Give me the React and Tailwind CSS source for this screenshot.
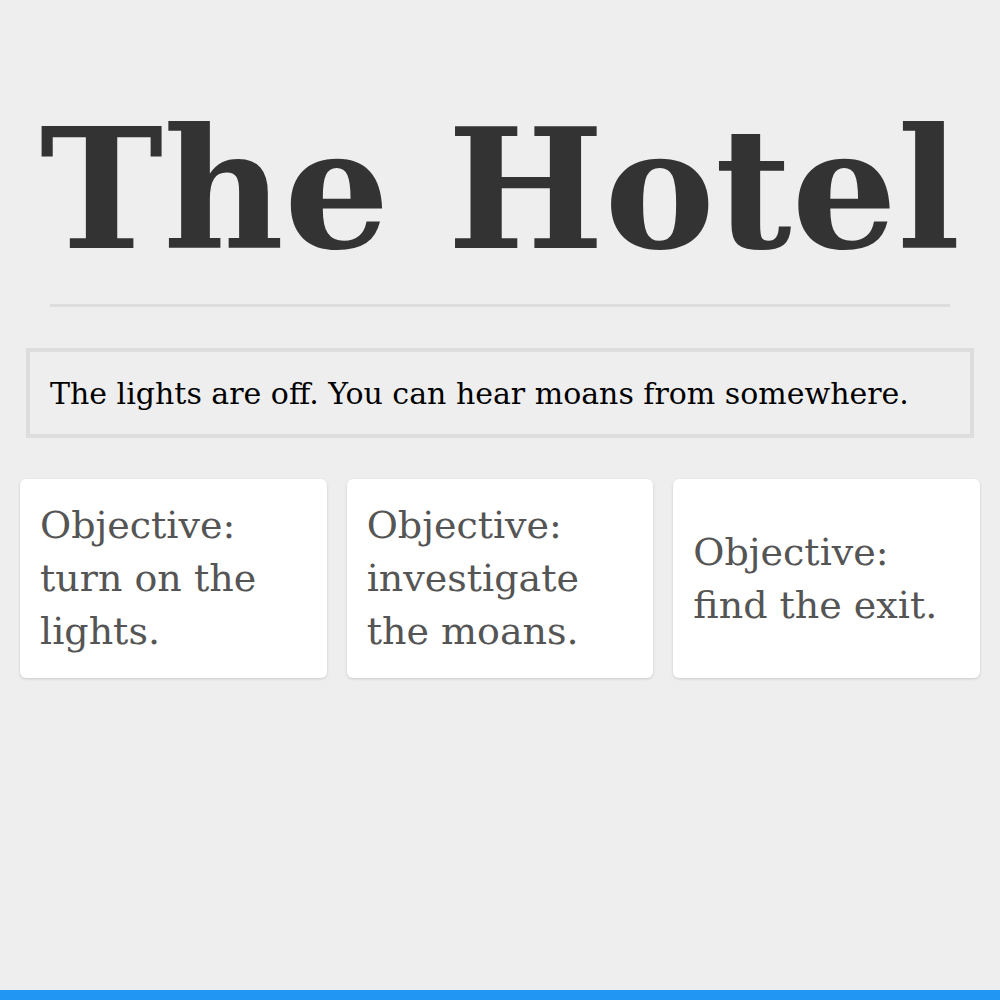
import React from 'react';

const objectives = [
  'Objective: turn on the lights.',
  'Objective: investigate the moans.',
  'Objective: find the exit.',
];

const App = () => {
  return (
    <div className='min-h-screen bg-[#eeeeee] font-["DejaVu_Serif",serif]'>
      {/* Title */}
      <div className='h-[304px] flex items-end justify-center pb-[31px]'>
        <h1 className='text-[166px] font-bold leading-none text-[#333333]'>The Hotel</h1>
      </div>
      <div className='mx-[50px] h-[3px] bg-[#dddddd]'></div>

      {/* Message */}
      <div className='mx-[26px] mt-[41px] border-4 border-[#dddddd] h-[90px] flex items-center px-[20px]'>
        <p className='text-[30px] text-black'>The lights are off. You can hear moans from somewhere.</p>
      </div>

      {/* Objectives */}
      <div className='grid grid-cols-3 gap-[20px] px-[20px] mt-[41px]'>
        {objectives.map((o) => (
          <div key={o} className='bg-white rounded-md shadow-[0_1px_3px_rgba(0,0,0,0.15)] p-[20px] flex items-center min-h-[199px]'>
            <p className='text-[38px] leading-[53px] text-[#555555]'>{o}</p>
          </div>
        ))}
      </div>

      <div className='fixed bottom-0 left-0 right-0 h-[10px] bg-[#2196f3]'></div>
    </div>
  );
};

export default App;
